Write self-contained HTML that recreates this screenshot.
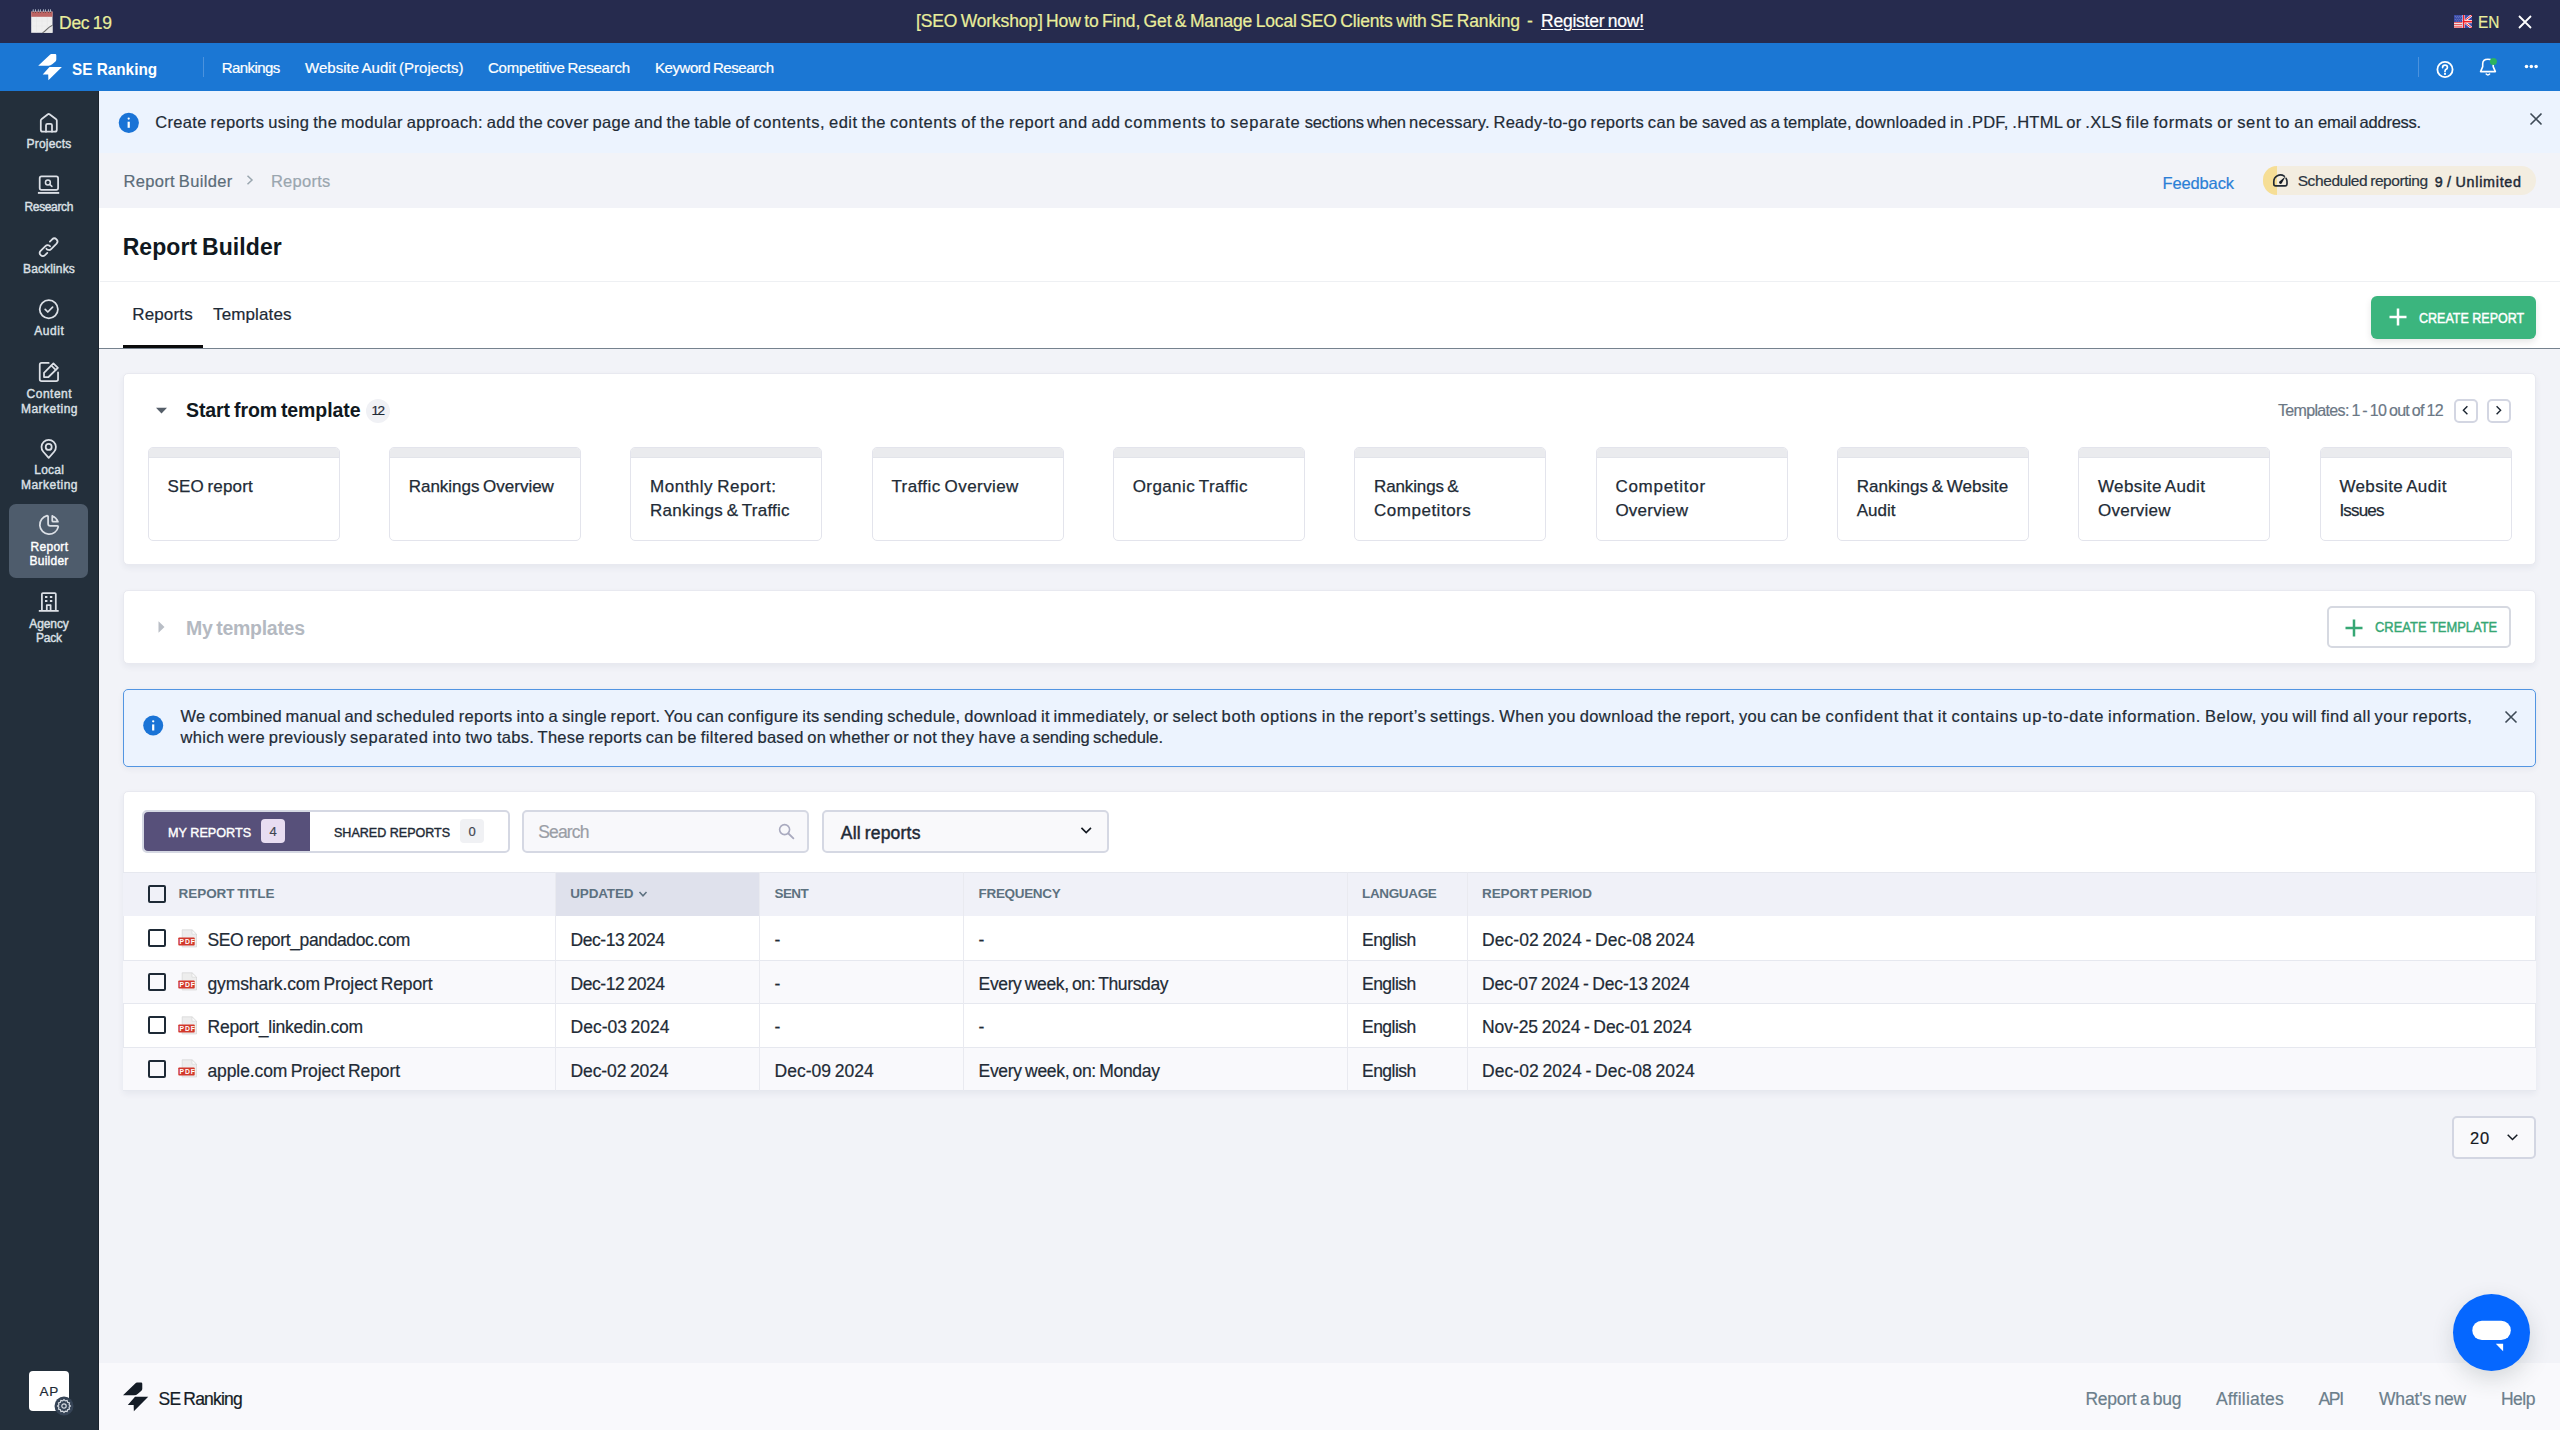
<!DOCTYPE html>
<html><head><meta charset="utf-8"><title>SE Ranking - Report Builder</title>
<style>
html,body{margin:0;padding:0;}
body{width:2560px;height:1430px;position:relative;overflow:hidden;background:#F2F3F8;font-family:"Liberation Sans",sans-serif;}
.b{position:absolute;box-sizing:content-box;}
.t{position:absolute;white-space:nowrap;line-height:1;}
.tc{background:#fff;border:1px solid #E3E4EC;border-radius:5px;overflow:hidden;box-sizing:border-box;}
.tch{height:9px;background:#EAEBEE;border-bottom:1px solid #E2E4EA;}
</style></head><body>
<div class="b" style="left:0px;top:0px;width:2560px;height:43px;background:#262B4E;"></div>
<div class="b" style="left:0px;top:43px;width:2560px;height:48px;background:#1B77D4;"></div>
<div class="b" style="left:0px;top:91px;width:98px;height:1339px;background:#232F3B;"></div>
<div class="b" style="left:98px;top:91px;width:1px;height:1339px;background:#1B242E;"></div>
<div class="b" style="left:99px;top:91px;width:2461px;height:62px;background:#ECF3FE;"></div>
<div class="b" style="left:99px;top:153px;width:2461px;height:55px;background:#F2F3F8;"></div>
<div class="b" style="left:99px;top:208px;width:2461px;height:140px;background:#FFFFFF;"></div>
<div class="b" style="left:100px;top:281px;width:2460px;height:1px;background:#EEF0F3;"></div>
<div class="b" style="left:99px;top:348px;width:2461px;height:1px;background:#76828E;"></div>
<div class="b" style="left:123px;top:345px;width:80px;height:3px;background:#0B0B0B;"></div>
<div class="b" style="left:99px;top:1363px;width:2461px;height:67px;background:#F9F9FC;"></div>
<svg class="b" style="left:26px;top:4px" width="34" height="34" viewBox="26 4 34 34">
<rect x="31.2" y="11.6" width="21.3" height="21.2" fill="#EFEFEF"/>
<rect x="31.2" y="11.6" width="21.3" height="5.2" fill="#BD6463"/>
<g stroke="#E2E2E2" stroke-width="0.3"><line x1="31.2" y1="21" x2="52.5" y2="21"/><line x1="31.2" y1="26" x2="52.5" y2="26"/><line x1="36.5" y1="16.8" x2="36.5" y2="32.8"/><line x1="42" y1="16.8" x2="42" y2="32.8"/><line x1="47.3" y1="16.8" x2="47.3" y2="32.8"/></g>
<g fill="#AEB6C6"><ellipse cx="33.2" cy="10.6" rx="0.55" ry="1.6"/><ellipse cx="35.5" cy="10.6" rx="0.55" ry="1.6"/><ellipse cx="38.3" cy="10.6" rx="0.55" ry="1.6"/><ellipse cx="40.4" cy="10.6" rx="0.55" ry="1.6"/><ellipse cx="43.4" cy="10.6" rx="0.55" ry="1.6"/><ellipse cx="45.4" cy="10.6" rx="0.55" ry="1.6"/><ellipse cx="48.4" cy="10.6" rx="0.55" ry="1.6"/><ellipse cx="50.5" cy="10.6" rx="0.55" ry="1.6"/></g>
<g fill="#5A3A3A"><circle cx="33.2" cy="12.6" r="0.5"/><circle cx="35.5" cy="12.6" r="0.5"/><circle cx="38.3" cy="12.6" r="0.5"/><circle cx="40.4" cy="12.6" r="0.5"/><circle cx="43.4" cy="12.6" r="0.5"/><circle cx="45.4" cy="12.6" r="0.5"/><circle cx="48.4" cy="12.6" r="0.5"/><circle cx="50.5" cy="12.6" r="0.5"/></g>
<path d="M42.5 32.8 C46 31.8 46.5 27.5 52.5 25.2 L52.5 32.8 Z" fill="#E6E6E6"/>
<path d="M42.5 32.8 C46 31.8 46.5 27.5 52.5 25.2" fill="none" stroke="#6A6A6A" stroke-width="1.1"/>
</svg>
<div class="t" style="left:59.0px;top:14.7px;font-size:17.5px;color:#E9EE9C;-webkit-text-stroke:0.2px currentColor;letter-spacing:-0.255px;word-spacing:-1.173px;">Dec 19</div>
<div class="t" style="left:916.0px;top:13.0px;font-size:17.5px;color:#E9EE9C;-webkit-text-stroke:0.2px currentColor;letter-spacing:-0.160px;word-spacing:-1.173px;">[SEO Workshop] How to Find, Get &amp; Manage Local SEO Clients with SE Ranking</div>
<div class="t" style="left:1527.0px;top:13.0px;font-size:17.5px;color:#E9EE9C;-webkit-text-stroke:0.2px currentColor;">-</div>
<div class="t" style="left:1541.0px;top:13.0px;font-size:17.5px;color:#FFFFFF;-webkit-text-stroke:0.2px currentColor;letter-spacing:-0.235px;text-decoration:underline;text-underline-offset:2px;word-spacing:-1.173px;">Register now!</div>
<svg class="b" style="left:2454px;top:14.8px" width="18" height="13.2" viewBox="0 0 18 13.2">
<rect width="18" height="13.2" fill="#3A4BA8"/>
<rect x="0" y="7.2" width="8.5" height="6" fill="#F2F2F2"/>
<g fill="#E8474A"><rect y="7.2" width="8.5" height="0.9"/><rect y="9" width="8.5" height="0.9"/><rect y="10.8" width="8.5" height="0.9"/><rect y="12.4" width="8.5" height="0.8"/></g>
<g fill="#C9D0EE" opacity="0.8"><circle cx="1.2" cy="1.2" r="0.45"/><circle cx="3.2" cy="1.2" r="0.45"/><circle cx="5.2" cy="1.2" r="0.45"/><circle cx="7.2" cy="1.2" r="0.45"/><circle cx="2.2" cy="2.8" r="0.45"/><circle cx="4.2" cy="2.8" r="0.45"/><circle cx="6.2" cy="2.8" r="0.45"/><circle cx="1.2" cy="4.4" r="0.45"/><circle cx="3.2" cy="4.4" r="0.45"/><circle cx="5.2" cy="4.4" r="0.45"/><circle cx="7.2" cy="4.4" r="0.45"/><circle cx="2.2" cy="6" r="0.45"/><circle cx="4.2" cy="6" r="0.45"/><circle cx="6.2" cy="6" r="0.45"/></g>
<path d="M10 6.6 L18 0 M10 6.6 L18 13.2" stroke="#fff" stroke-width="2.4"/>
<path d="M10.5 5.6 L18 0.2 M10.5 7.6 L18 13" stroke="#F01C24" stroke-width="1"/>
<rect x="8.5" y="0" width="2.2" height="13.2" fill="#fff"/>
<rect x="8.5" y="5" width="9.5" height="3.2" fill="#fff"/>
<rect x="9" y="0" width="1.3" height="13.2" fill="#F01C24"/>
<rect x="8.5" y="5.8" width="9.5" height="1.7" fill="#F01C24"/>
</svg>
<div class="t" style="left:2478.4px;top:13.6px;font-size:17px;color:#E9EE9C;-webkit-text-stroke:0.2px currentColor;transform:scaleX(0.9065);transform-origin:0 0;">EN</div>
<svg class="b" style="left:2518px;top:14.5px" width="14" height="14" viewBox="0 0 14 14"><path d="M1 1 L13 13 M13 1 L1 13" stroke="#fff" stroke-width="1.8"/></svg>
<svg class="b" style="left:34px;top:50px" width="32" height="34" viewBox="34 50 32 34"><path d="M38.2 65.7 L50.2 54.5 Q50.6 54.1 51.2 54.1 L55.2 54.1 Q56.3 54.1 56.3 55.2 L56.3 59.6 Q56.3 60.6 55.5 61.4 L52.2 64.3 Q50.6 65.7 48.6 65.7 Z" fill="#fff"/><path d="M42.7 74.5 L49.5 66.9 L61.9 66.9 L48.4 80.2 L48.2 74.5 Z" fill="#fff"/></svg>
<div class="t" style="left:72.4px;top:60.9px;font-size:16.5px;color:#FFFFFF;font-weight:700;transform:scaleX(0.9282);transform-origin:0 0;">SE Ranking</div>
<div class="b" style="left:203px;top:57px;width:1px;height:20px;background:#4B92DD;"></div>
<div class="t" style="left:221.8px;top:60.2px;font-size:15px;color:#FFFFFF;-webkit-text-stroke:0.2px currentColor;letter-spacing:-0.591px;">Rankings</div>
<div class="t" style="left:305.0px;top:60.2px;font-size:15px;color:#FFFFFF;-webkit-text-stroke:0.2px currentColor;letter-spacing:0.031px;word-spacing:-1.005px;">Website Audit (Projects)</div>
<div class="t" style="left:488.0px;top:60.2px;font-size:15px;color:#FFFFFF;-webkit-text-stroke:0.2px currentColor;letter-spacing:-0.240px;word-spacing:-1.005px;">Competitive Research</div>
<div class="t" style="left:655.0px;top:60.2px;font-size:15px;color:#FFFFFF;-webkit-text-stroke:0.2px currentColor;letter-spacing:-0.448px;word-spacing:-1.005px;">Keyword Research</div>
<div class="b" style="left:2418px;top:57px;width:1px;height:20px;background:#4B92DD;"></div>
<svg class="b" style="left:2435px;top:60px" width="20" height="20" viewBox="0 0 20 20"><circle cx="10" cy="9.5" r="7.6" fill="none" stroke="#fff" stroke-width="1.8"/><path d="M7.6 7.6 Q7.6 5.2 10 5.2 Q12.4 5.2 12.4 7.4 Q12.4 8.8 10.8 9.6 Q10 10 10 11.4" fill="none" stroke="#fff" stroke-width="1.7" stroke-linecap="round"/><circle cx="10" cy="13.9" r="1.1" fill="#fff"/></svg>
<svg class="b" style="left:2475px;top:54px" width="26" height="26" viewBox="2475 54 26 26"><path d="M2480.6 71.6 L2495.4 71.6 L2493.2 66.6 L2493.2 63.8 Q2493.2 59.3 2487.9 59.3 Q2482.7 59.3 2482.7 63.8 L2482.7 66.6 Z" fill="none" stroke="#fff" stroke-width="1.6" stroke-linejoin="round"/><path d="M2486.2 74.1 Q2487.9 75.9 2489.6 74.1" fill="none" stroke="#fff" stroke-width="1.5" stroke-linecap="round"/><circle cx="2493.4" cy="61.5" r="3.5" fill="#2DB360"/></svg>
<svg class="b" style="left:2520px;top:60px" width="22" height="12" viewBox="2520 60 22 12"><circle cx="2526.5" cy="66.4" r="1.75" fill="#fff"/><circle cx="2531.3" cy="66.4" r="1.75" fill="#fff"/><circle cx="2536.1" cy="66.4" r="1.75" fill="#fff"/></svg>
<div class="b" style="left:9px;top:504px;width:79px;height:74px;background:#4E5C6C;border-radius:7px;"></div>
<svg class="b" style="left:0px;top:91px" width="98" height="570" viewBox="0 91 98 570"><g fill="none" stroke="#DCE0E6" stroke-width="1.75" stroke-linecap="round" stroke-linejoin="round">
<path d="M40.8 129.7 L40.8 120.6 Q40.8 119.8 41.4 119.3 L47.9 114.3 Q48.7 113.7 49.5 114.3 L56.2 119.3 Q56.8 119.8 56.8 120.6 L56.8 129.7 Q56.8 131.7 54.8 131.7 L42.8 131.7 Q40.8 131.7 40.8 129.7 Z"/>
<path d="M46 131.7 L46 125.3 Q46 123.8 47.5 123.8 L50.5 123.8 Q52 123.8 52 125.3 L52 131.7"/>
<rect x="39.7" y="176.4" width="18.4" height="13.4" rx="1.8"/>
<path d="M37.9 192.9 L59.2 192.9" stroke-linecap="butt" stroke-width="1.9"/>
<circle cx="47.9" cy="182.5" r="2.45" stroke-width="1.5"/>
<path d="M49.7 184.4 L51.9 186.4" stroke-width="1.5"/>
<path d="M49.87 241.59 L52.21 239.26 A3.1 3.1 0 0 1 56.59 243.64 L51.14 249.09 A3.1 3.1 0 0 1 46.41 248.68"/>
<path d="M50.08 246.33 A3.1 3.1 0 0 0 45.41 246.01 L40.61 250.81 A3.1 3.1 0 0 0 44.99 255.19 L47.33 252.86"/>
<circle cx="48.8" cy="309.2" r="9.1"/>
<path d="M45.2 309.4 L47.8 312 L52.6 307.2"/>
<path d="M48.7 362.95 L41.6 362.95 Q39.75 362.95 39.75 364.8 L39.75 379.3 Q39.75 381.15 41.6 381.15 L56.2 381.15 Q58.05 381.15 58.05 379.3 L58.05 372.4"/>
<path d="M44 377 L44 372.8 L53.4 363.4 L57.9 367.8 L48.5 377 Z"/>
<path d="M51.3 365.5 L55.7 369.9"/>
<path d="M48.7 457.9 L43.29 451.75 A7.2 7.2 0 1 1 54.11 451.75 Z"/>
<circle cx="48.7" cy="446.9" r="3"/>
<g transform="translate(36.66 512.34) scale(1.04)" stroke-width="1.68"><path d="M10 3.2a9 9 0 1 0 10.8 10.8a1 1 0 0 0 -1 -1h-6.8a2 2 0 0 1 -2 -2v-7a.9 .9 0 0 0 -1 -.8"/><path d="M15 3.5a9 9 0 0 1 5.5 5.5h-4.5a1 1 0 0 1 -1 -1v-4.5"/></g>
<path d="M41.9 610.9 L41.9 594.1 Q41.9 593.1 42.9 593.1 L54.8 593.1 Q55.8 593.1 55.8 594.1 L55.8 610.9" stroke-linecap="butt"/>
<path d="M38.8 610.9 L58.7 610.9" stroke-linecap="butt"/>
<path d="M46.8 610.9 L46.8 605 L50.6 605 L50.6 610.9" stroke-linecap="butt"/>
</g>
<g fill="#DCE0E6"><rect x="45" y="596" width="2.4" height="2"/><rect x="49.9" y="596" width="2.4" height="2"/><rect x="45" y="600" width="2.4" height="2"/><rect x="49.9" y="600" width="2.4" height="2"/></g>
</svg>
<div class="t" style="left:26.6px;top:137.8px;font-size:12px;color:#DCE0E6;letter-spacing:0.193px;-webkit-text-stroke:0.4px currentColor;">Projects</div>
<div class="t" style="left:24.5px;top:200.8px;font-size:12px;color:#DCE0E6;letter-spacing:-0.351px;-webkit-text-stroke:0.4px currentColor;">Research</div>
<div class="t" style="left:23.0px;top:263.3px;font-size:12px;color:#DCE0E6;letter-spacing:0.139px;-webkit-text-stroke:0.4px currentColor;">Backlinks</div>
<div class="t" style="left:34.3px;top:325.3px;font-size:12px;color:#DCE0E6;letter-spacing:0.562px;-webkit-text-stroke:0.4px currentColor;">Audit</div>
<div class="t" style="left:26.6px;top:387.5px;font-size:12px;color:#DCE0E6;letter-spacing:0.495px;-webkit-text-stroke:0.4px currentColor;">Content</div>
<div class="t" style="left:21.0px;top:402.8px;font-size:12px;color:#DCE0E6;letter-spacing:0.476px;-webkit-text-stroke:0.4px currentColor;">Marketing</div>
<div class="t" style="left:34.3px;top:464.4px;font-size:12px;color:#DCE0E6;letter-spacing:0.203px;-webkit-text-stroke:0.4px currentColor;">Local</div>
<div class="t" style="left:21.0px;top:478.8px;font-size:12px;color:#DCE0E6;letter-spacing:0.476px;-webkit-text-stroke:0.4px currentColor;">Marketing</div>
<div class="t" style="left:30.5px;top:541.3px;font-size:12px;color:#FFFFFF;letter-spacing:0.296px;-webkit-text-stroke:0.4px currentColor;">Report</div>
<div class="t" style="left:29.6px;top:555.3px;font-size:12px;color:#FFFFFF;letter-spacing:0.224px;-webkit-text-stroke:0.4px currentColor;">Builder</div>
<div class="t" style="left:29.3px;top:618.3px;font-size:12px;color:#DCE0E6;letter-spacing:-0.105px;-webkit-text-stroke:0.4px currentColor;">Agency</div>
<div class="t" style="left:36.0px;top:632.3px;font-size:12px;color:#DCE0E6;letter-spacing:-0.226px;-webkit-text-stroke:0.4px currentColor;">Pack</div>
<div class="b" style="left:29px;top:1371px;width:40px;height:40px;background:#fff;border-radius:4px;"></div>
<div class="t" style="left:39.6px;top:1385.4px;font-size:13.5px;color:#1E2A36;-webkit-text-stroke:0.2px currentColor;letter-spacing:0.590px;">AP</div>
<svg class="b" style="left:54px;top:1396px" width="20" height="20" viewBox="0 0 20 20"><circle cx="10" cy="10" r="9.5" fill="#364456"/><g fill="none" stroke="#D5DAE0" stroke-width="1.2"><circle cx="10" cy="10" r="2.2"/><path d="M10 3.6 L11.3 4.9 L13.1 4.4 L13.6 6.2 L15.5 6.9 L15.1 8.7 L16.4 10 L15.1 11.3 L15.5 13.1 L13.6 13.8 L13.1 15.6 L11.3 15.1 L10 16.4 L8.7 15.1 L6.9 15.6 L6.4 13.8 L4.5 13.1 L4.9 11.3 L3.6 10 L4.9 8.7 L4.5 6.9 L6.4 6.2 L6.9 4.4 L8.7 4.9 Z"/></g></svg>
<svg class="b" style="left:118px;top:112px" width="22" height="22" viewBox="0 0 22 22"><circle cx="10.8" cy="10.8" r="10.1" fill="#1A73D6"/><circle cx="10.7" cy="6.6" r="1.15" fill="#fff"/><rect x="9.6" y="9.7" width="2.2" height="6.1" fill="#fff"/></svg>
<div class="t" style="left:155.2px;top:113.8px;font-size:16.5px;color:#222B36;letter-spacing:0.345px;word-spacing:-1.106px;-webkit-text-stroke:0.2px currentColor;">Create reports using the </div>
<div class="t" style="left:341.0px;top:113.8px;font-size:16.5px;color:#222B36;letter-spacing:0.324px;word-spacing:-1.106px;-webkit-text-stroke:0.2px currentColor;">modular approach: add the </div>
<div class="t" style="left:546.8px;top:113.8px;font-size:16.5px;color:#222B36;letter-spacing:0.317px;word-spacing:-1.106px;-webkit-text-stroke:0.2px currentColor;">cover page and the table of </div>
<div class="t" style="left:753.6px;top:113.8px;font-size:16.5px;color:#222B36;letter-spacing:0.498px;word-spacing:-1.106px;-webkit-text-stroke:0.2px currentColor;">contents, edit the </div>
<div class="t" style="left:890.0px;top:113.8px;font-size:16.5px;color:#222B36;letter-spacing:0.593px;word-spacing:-1.106px;-webkit-text-stroke:0.2px currentColor;">contents of the </div>
<div class="t" style="left:1009.0px;top:113.8px;font-size:16.5px;color:#222B36;letter-spacing:0.447px;word-spacing:-1.106px;-webkit-text-stroke:0.2px currentColor;">report and add </div>
<div class="t" style="left:1124.3px;top:113.8px;font-size:16.5px;color:#222B36;letter-spacing:0.761px;word-spacing:-1.106px;-webkit-text-stroke:0.2px currentColor;">comments to separate </div>
<div class="t" style="left:1304.8px;top:113.8px;font-size:16.5px;color:#222B36;letter-spacing:-0.195px;word-spacing:-1.106px;-webkit-text-stroke:0.2px currentColor;">sections when </div>
<div class="t" style="left:1409.0px;top:113.8px;font-size:16.5px;color:#222B36;letter-spacing:0.230px;word-spacing:-1.106px;-webkit-text-stroke:0.2px currentColor;">necessary. Ready-to-go </div>
<div class="t" style="left:1590.6px;top:113.8px;font-size:16.5px;color:#222B36;letter-spacing:0.303px;word-spacing:-1.106px;-webkit-text-stroke:0.2px currentColor;">reports can be </div>
<div class="t" style="left:1701.9px;top:113.8px;font-size:16.5px;color:#222B36;letter-spacing:0.042px;word-spacing:-1.106px;-webkit-text-stroke:0.2px currentColor;">saved as a template, </div>
<div class="t" style="left:1855.2px;top:113.8px;font-size:16.5px;color:#222B36;letter-spacing:0.224px;word-spacing:-1.106px;-webkit-text-stroke:0.2px currentColor;">downloaded in .PDF, </div>
<div class="t" style="left:2012.3px;top:113.8px;font-size:16.5px;color:#222B36;letter-spacing:0.274px;word-spacing:-1.106px;-webkit-text-stroke:0.2px currentColor;">.HTML or .XLS </div>
<div class="t" style="left:2125.9px;top:113.8px;font-size:16.5px;color:#222B36;letter-spacing:0.630px;word-spacing:-1.106px;-webkit-text-stroke:0.2px currentColor;">file formats or </div>
<div class="t" style="left:2237.2px;top:113.8px;font-size:16.5px;color:#222B36;letter-spacing:0.651px;word-spacing:-1.106px;-webkit-text-stroke:0.2px currentColor;">sent to an </div>
<div class="t" style="left:2318.1px;top:113.8px;font-size:16.5px;color:#222B36;letter-spacing:-0.238px;word-spacing:-1.106px;-webkit-text-stroke:0.2px currentColor;">email address.</div>
<svg class="b" style="left:2529px;top:112px" width="14" height="14" viewBox="0 0 14 14"><path d="M1.5 1.5 L12.5 12.5 M12.5 1.5 L1.5 12.5" stroke="#3E4A56" stroke-width="1.6"/></svg>
<div class="t" style="left:123.4px;top:173.2px;font-size:16.5px;color:#5B6C79;-webkit-text-stroke:0.2px currentColor;letter-spacing:0.349px;word-spacing:-1.106px;">Report Builder</div>
<svg class="b" style="left:245px;top:174px" width="10" height="12" viewBox="0 0 10 12"><path d="M2.5 1.8 L7 6 L2.5 10.2" fill="none" stroke="#9AA6AF" stroke-width="1.5"/></svg>
<div class="t" style="left:270.9px;top:173.2px;font-size:16.5px;color:#9AA6AF;-webkit-text-stroke:0.2px currentColor;letter-spacing:0.271px;">Reports</div>
<div class="t" style="left:2162.5px;top:174.6px;font-size:16.5px;color:#2B7FD6;-webkit-text-stroke:0.2px currentColor;letter-spacing:-0.138px;">Feedback</div>
<div class="b" style="left:2263px;top:166px;width:273px;height:29px;background:#F3EDE0;border-radius:15px;overflow:hidden;"></div>
<div class="b" style="left:2263px;top:166px;width:14px;height:29px;background:#F6DE96;border-radius:15px 0 0 15px;"></div>
<svg class="b" style="left:2268px;top:170px" width="24" height="20" viewBox="2268 170 24 20"><path d="M2284.2 176.2 A6.6 6.6 0 0 0 2273.8 181.6 L2273.8 184.1 Q2273.8 185.9 2275.6 185.9 L2285.2 185.9 Q2287 185.9 2287 184.1 L2287 181.6 A6.6 6.6 0 0 0 2286.1 178.3" fill="none" stroke="#222A33" stroke-width="1.65" stroke-linecap="round" stroke-linejoin="round"/><path d="M2285.6 176.3 L2281.8 183.2 Q2280.8 184.4 2279.5 183.5 Q2278.5 182.4 2279.5 181.5 Z" fill="#141A22"/></svg>
<div class="t" style="left:2297.7px;top:173.2px;font-size:15.5px;color:#2B3540;-webkit-text-stroke:0.2px currentColor;letter-spacing:-0.406px;word-spacing:-1.038px;">Scheduled reporting</div>
<div class="t" style="left:2434.7px;top:175.1px;font-size:14.3px;color:#1E2A36;letter-spacing:0.728px;-webkit-text-stroke:0.45px #1E2A36;word-spacing:-0.958px;">9 / Unlimited</div>
<div class="t" style="left:122.7px;top:235.5px;font-size:23px;color:#101820;font-weight:700;letter-spacing:0.062px;word-spacing:-1.541px;">Report Builder</div>
<div class="t" style="left:132.2px;top:305.8px;font-size:17px;color:#1E2A36;-webkit-text-stroke:0.2px currentColor;letter-spacing:0.162px;">Reports</div>
<div class="t" style="left:213.0px;top:305.8px;font-size:17px;color:#1E2A36;-webkit-text-stroke:0.2px currentColor;letter-spacing:0.127px;">Templates</div>
<div class="b" style="left:2371px;top:296px;width:165px;height:43px;background:#3BB57E;border-radius:6px;box-shadow:0 3px 7px rgba(0,0,0,0.10);"></div>
<svg class="b" style="left:2389px;top:308px" width="18" height="18" viewBox="0 0 18 18"><path d="M9 0.5 V17.5 M0.5 9 H17.5" stroke="#fff" stroke-width="2.5"/></svg>
<div class="t" style="left:2418.5px;top:309.6px;font-size:15.3px;color:#FFFFFF;-webkit-text-stroke:0.45px #FFFFFF;transform:scaleX(0.8181);transform-origin:0 0;">CREATE REPORT</div>
<div class="b" style="left:123px;top:373px;width:2413px;height:192px;background:#fff;border:1px solid #E8E9F0;box-sizing:border-box;border-radius:5px;box-shadow:0 3px 6px rgba(40,45,80,0.06);"></div>
<svg class="b" style="left:155px;top:406px" width="13" height="9" viewBox="0 0 13 9"><path d="M1 1.8 L12 1.8 L6.5 7.4 Z" fill="#555E69"/></svg>
<div class="t" style="left:186.0px;top:401.1px;font-size:19.5px;color:#101820;font-weight:700;letter-spacing:-0.093px;word-spacing:-1.306px;">Start from template</div>
<div class="b" style="left:366px;top:399px;width:24px;height:24px;background:#F0F1F5;border-radius:12px;"></div>
<div class="t" style="left:371.5px;top:404.2px;font-size:13.5px;color:#1E2A36;-webkit-text-stroke:0.2px currentColor;letter-spacing:-1.517px;">12</div>
<div class="t" style="left:2278.0px;top:403.1px;font-size:16px;color:#6B7785;-webkit-text-stroke:0.2px currentColor;letter-spacing:-0.666px;word-spacing:-1.072px;">Templates: 1 - 10 out of 12</div>
<div class="b" style="left:2454px;top:399px;width:20px;height:20px;border:2px solid #D3D6E2;border-radius:5px;"></div>
<svg class="b" style="left:2461px;top:405px" width="9" height="11" viewBox="0 0 9 11"><path d="M6.4 1.3 L2.4 5.3 L6.4 9.3" fill="none" stroke="#1A2430" stroke-width="1.4"/></svg>
<div class="b" style="left:2487.3px;top:399px;width:20px;height:20px;border:2px solid #D3D6E2;border-radius:5px;"></div>
<svg class="b" style="left:2494px;top:405px" width="9" height="11" viewBox="0 0 9 11"><path d="M2.6 1.3 L6.6 5.3 L2.6 9.3" fill="none" stroke="#1A2430" stroke-width="1.4"/></svg>
<div class="b tc" style="left:147.6px;top:447px;width:192px;height:94px;"><div class="tch"></div></div>
<div class="t" style="left:167.4px;top:477.7px;font-size:17px;color:#222B36;letter-spacing:0.167px;-webkit-text-stroke:0.25px #222B36;word-spacing:-1.139px;">SEO report</div>
<div class="b tc" style="left:388.9px;top:447px;width:192px;height:94px;"><div class="tch"></div></div>
<div class="t" style="left:408.7px;top:477.7px;font-size:17px;color:#222B36;letter-spacing:-0.007px;-webkit-text-stroke:0.25px #222B36;word-spacing:-1.139px;">Rankings Overview</div>
<div class="b tc" style="left:630.3px;top:447px;width:192px;height:94px;"><div class="tch"></div></div>
<div class="t" style="left:650.1px;top:477.7px;font-size:17px;color:#222B36;letter-spacing:0.496px;-webkit-text-stroke:0.25px #222B36;word-spacing:-1.139px;">Monthly Report:</div>
<div class="t" style="left:650.1px;top:501.7px;font-size:17px;color:#222B36;letter-spacing:0.243px;-webkit-text-stroke:0.25px #222B36;word-spacing:-1.139px;">Rankings &amp; Traffic</div>
<div class="b tc" style="left:871.6px;top:447px;width:192px;height:94px;"><div class="tch"></div></div>
<div class="t" style="left:891.4px;top:477.7px;font-size:17px;color:#222B36;letter-spacing:0.419px;-webkit-text-stroke:0.25px #222B36;word-spacing:-1.139px;">Traffic Overview</div>
<div class="b tc" style="left:1112.9px;top:447px;width:192px;height:94px;"><div class="tch"></div></div>
<div class="t" style="left:1132.7px;top:477.7px;font-size:17px;color:#222B36;letter-spacing:0.408px;-webkit-text-stroke:0.25px #222B36;word-spacing:-1.139px;">Organic Traffic</div>
<div class="b tc" style="left:1354.2px;top:447px;width:192px;height:94px;"><div class="tch"></div></div>
<div class="t" style="left:1374.0px;top:477.7px;font-size:17px;color:#222B36;letter-spacing:-0.122px;-webkit-text-stroke:0.25px #222B36;word-spacing:-1.139px;">Rankings &amp;</div>
<div class="t" style="left:1374.0px;top:501.7px;font-size:17px;color:#222B36;letter-spacing:0.516px;-webkit-text-stroke:0.25px #222B36;">Competitors</div>
<div class="b tc" style="left:1595.6px;top:447px;width:192px;height:94px;"><div class="tch"></div></div>
<div class="t" style="left:1615.4px;top:477.7px;font-size:17px;color:#222B36;letter-spacing:0.729px;-webkit-text-stroke:0.25px #222B36;">Competitor</div>
<div class="t" style="left:1615.4px;top:501.7px;font-size:17px;color:#222B36;letter-spacing:0.250px;-webkit-text-stroke:0.25px #222B36;">Overview</div>
<div class="b tc" style="left:1836.9px;top:447px;width:192px;height:94px;"><div class="tch"></div></div>
<div class="t" style="left:1856.7px;top:477.7px;font-size:17px;color:#222B36;letter-spacing:0.054px;-webkit-text-stroke:0.25px #222B36;word-spacing:-1.139px;">Rankings &amp; Website</div>
<div class="t" style="left:1856.7px;top:501.7px;font-size:17px;color:#222B36;-webkit-text-stroke:0.25px #222B36;">Audit</div>
<div class="b tc" style="left:2078.2px;top:447px;width:192px;height:94px;"><div class="tch"></div></div>
<div class="t" style="left:2098.0px;top:477.7px;font-size:17px;color:#222B36;letter-spacing:0.375px;-webkit-text-stroke:0.25px #222B36;word-spacing:-1.139px;">Website Audit</div>
<div class="t" style="left:2098.0px;top:501.7px;font-size:17px;color:#222B36;letter-spacing:0.250px;-webkit-text-stroke:0.25px #222B36;">Overview</div>
<div class="b tc" style="left:2319.6px;top:447px;width:192px;height:94px;"><div class="tch"></div></div>
<div class="t" style="left:2339.4px;top:477.7px;font-size:17px;color:#222B36;letter-spacing:0.375px;-webkit-text-stroke:0.25px #222B36;word-spacing:-1.139px;">Website Audit</div>
<div class="t" style="left:2339.4px;top:501.7px;font-size:17px;color:#222B36;letter-spacing:-0.807px;-webkit-text-stroke:0.25px #222B36;">Issues</div>
<div class="b" style="left:123px;top:590px;width:2413px;height:74px;background:#fff;border:1px solid #E8E9F0;box-sizing:border-box;border-radius:5px;box-shadow:0 3px 6px rgba(40,45,80,0.06);"></div>
<svg class="b" style="left:157px;top:620px" width="9" height="14" viewBox="0 0 9 14"><path d="M1.5 1.2 L7.5 7 L1.5 12.8 Z" fill="#B9BEC6"/></svg>
<div class="t" style="left:186.0px;top:618.9px;font-size:19.5px;color:#B4B9C1;font-weight:700;letter-spacing:-0.294px;word-spacing:-1.306px;">My templates</div>
<div class="b" style="left:2327px;top:606px;width:180px;height:38px;border:2px solid #D6D9E1;border-radius:5px;background:#fff;"></div>
<svg class="b" style="left:2345px;top:619px" width="18" height="18" viewBox="0 0 18 18"><path d="M9 0.5 V17.5 M0.5 9 H17.5" stroke="#36A774" stroke-width="2.5"/></svg>
<div class="t" style="left:2375.0px;top:618.8px;font-size:15.3px;color:#36A774;-webkit-text-stroke:0.45px #36A774;transform:scaleX(0.8459);transform-origin:0 0;">CREATE TEMPLATE</div>
<div class="b" style="left:123px;top:689px;width:2411px;height:76px;background:#ECF3FE;border:1px solid #5295E2;border-radius:5px;box-shadow:0 2px 6px rgba(30,40,60,0.06);"></div>
<svg class="b" style="left:143px;top:715px" width="21" height="21" viewBox="0 0 21 21"><circle cx="10.2" cy="10.5" r="10" fill="#1A73D6"/><circle cx="10.2" cy="6.3" r="1.15" fill="#fff"/><rect x="9.1" y="9.4" width="2.2" height="6.1" fill="#fff"/></svg>
<div class="t" style="left:180.5px;top:707.8px;font-size:16.5px;color:#222B36;letter-spacing:0.180px;word-spacing:-1.106px;-webkit-text-stroke:0.2px currentColor;">We combined manual and </div>
<div class="t" style="left:376.2px;top:707.8px;font-size:16.5px;color:#222B36;letter-spacing:0.377px;word-spacing:-1.106px;-webkit-text-stroke:0.2px currentColor;">scheduled reports into a </div>
<div class="t" style="left:561.9px;top:707.8px;font-size:16.5px;color:#222B36;letter-spacing:0.306px;word-spacing:-1.106px;-webkit-text-stroke:0.2px currentColor;">single report. You can </div>
<div class="t" style="left:727.8px;top:707.8px;font-size:16.5px;color:#222B36;letter-spacing:0.308px;word-spacing:-1.106px;-webkit-text-stroke:0.2px currentColor;">configure its sending </div>
<div class="t" style="left:887.2px;top:707.8px;font-size:16.5px;color:#222B36;letter-spacing:0.293px;word-spacing:-1.106px;-webkit-text-stroke:0.2px currentColor;">schedule, download it </div>
<div class="t" style="left:1053.6px;top:707.8px;font-size:16.5px;color:#222B36;letter-spacing:0.365px;word-spacing:-1.106px;-webkit-text-stroke:0.2px currentColor;">immediately, or select </div>
<div class="t" style="left:1221.6px;top:707.8px;font-size:16.5px;color:#222B36;letter-spacing:0.606px;word-spacing:-1.106px;-webkit-text-stroke:0.2px currentColor;">both options in </div>
<div class="t" style="left:1339.9px;top:707.8px;font-size:16.5px;color:#222B36;letter-spacing:0.429px;word-spacing:-1.106px;-webkit-text-stroke:0.2px currentColor;">the report’s settings. </div>
<div class="t" style="left:1499.3px;top:707.8px;font-size:16.5px;color:#222B36;letter-spacing:0.412px;word-spacing:-1.106px;-webkit-text-stroke:0.2px currentColor;">When you download </div>
<div class="t" style="left:1657.5px;top:707.8px;font-size:16.5px;color:#222B36;letter-spacing:0.318px;word-spacing:-1.106px;-webkit-text-stroke:0.2px currentColor;">the report, you can </div>
<div class="t" style="left:1801.6px;top:707.8px;font-size:16.5px;color:#222B36;letter-spacing:0.714px;word-spacing:-1.106px;-webkit-text-stroke:0.2px currentColor;">be confident that it </div>
<div class="t" style="left:1951.6px;top:707.8px;font-size:16.5px;color:#222B36;letter-spacing:0.643px;word-spacing:-1.106px;-webkit-text-stroke:0.2px currentColor;">contains up-to-date </div>
<div class="t" style="left:2108.1px;top:707.8px;font-size:16.5px;color:#222B36;letter-spacing:0.551px;word-spacing:-1.106px;-webkit-text-stroke:0.2px currentColor;">information. Below, </div>
<div class="t" style="left:2260.9px;top:707.8px;font-size:16.5px;color:#222B36;letter-spacing:0.398px;word-spacing:-1.106px;-webkit-text-stroke:0.2px currentColor;">you will find all </div>
<div class="t" style="left:2374.6px;top:707.8px;font-size:16.5px;color:#222B36;letter-spacing:0.474px;word-spacing:-1.106px;-webkit-text-stroke:0.2px currentColor;">your reports,</div>
<div class="t" style="left:180.5px;top:728.9px;font-size:16.5px;color:#222B36;letter-spacing:0.310px;word-spacing:-1.106px;-webkit-text-stroke:0.2px currentColor;">which were previously </div>
<div class="t" style="left:350.0px;top:728.9px;font-size:16.5px;color:#222B36;letter-spacing:0.568px;word-spacing:-1.106px;-webkit-text-stroke:0.2px currentColor;">separated into two </div>
<div class="t" style="left:496.9px;top:728.9px;font-size:16.5px;color:#222B36;letter-spacing:0.284px;word-spacing:-1.106px;-webkit-text-stroke:0.2px currentColor;">tabs. These reports </div>
<div class="t" style="left:645.7px;top:728.9px;font-size:16.5px;color:#222B36;letter-spacing:0.436px;word-spacing:-1.106px;-webkit-text-stroke:0.2px currentColor;">can be filtered </div>
<div class="t" style="left:757.6px;top:728.9px;font-size:16.5px;color:#222B36;letter-spacing:0.203px;word-spacing:-1.106px;-webkit-text-stroke:0.2px currentColor;">based on whether </div>
<div class="t" style="left:893.5px;top:728.9px;font-size:16.5px;color:#222B36;letter-spacing:0.471px;word-spacing:-1.106px;-webkit-text-stroke:0.2px currentColor;">or not they have </div>
<div class="t" style="left:1020.0px;top:728.9px;font-size:16.5px;color:#222B36;letter-spacing:-0.087px;word-spacing:-1.106px;-webkit-text-stroke:0.2px currentColor;">a sending schedule.</div>
<svg class="b" style="left:2504px;top:710px" width="14" height="14" viewBox="0 0 14 14"><path d="M1.5 1.5 L12.5 12.5 M12.5 1.5 L1.5 12.5" stroke="#3E4A56" stroke-width="1.6"/></svg>
<div class="b" style="left:123px;top:791px;width:2413px;height:300px;background:#fff;border:1px solid #E8E9F0;box-sizing:border-box;border-radius:5px 5px 0 0;box-shadow:0 3px 6px rgba(40,45,80,0.06);"></div>
<div class="b" style="left:142px;top:810px;width:364px;height:39px;border:2px solid #D5D8E3;border-radius:5px;"></div>
<div class="b" style="left:143.5px;top:812px;width:166px;height:39px;background:#57507A;border-radius:4px 0 0 4px;"></div>
<div class="t" style="left:168.2px;top:825.5px;font-size:13.2px;color:#FFFFFF;-webkit-text-stroke:0.4px #FFFFFF;transform:scaleX(0.9591);transform-origin:0 0;">MY REPORTS</div>
<div class="b" style="left:261px;top:819px;width:24px;height:24px;background:#E8DDF1;border-radius:4px;"></div>
<div class="t" style="left:269.5px;top:825.2px;font-size:13px;color:#3E4650;-webkit-text-stroke:0.2px currentColor;">4</div>
<div class="t" style="left:333.5px;top:825.5px;font-size:13.2px;color:#1E2A36;-webkit-text-stroke:0.4px #1E2A36;transform:scaleX(0.9509);transform-origin:0 0;">SHARED REPORTS</div>
<div class="b" style="left:460px;top:819px;width:24px;height:24px;background:#F0F1F4;border-radius:4px;"></div>
<div class="t" style="left:468.5px;top:825.2px;font-size:13px;color:#3E4650;-webkit-text-stroke:0.2px currentColor;">0</div>
<div class="b" style="left:522px;top:809.5px;width:283px;height:39px;border:2px solid #D5D8E3;border-radius:5px;background:#F8F8FB;"></div>
<div class="t" style="left:538.2px;top:823.5px;font-size:17.5px;color:#9A9EA6;-webkit-text-stroke:0.2px currentColor;letter-spacing:-0.850px;">Search</div>
<svg class="b" style="left:775px;top:820px" width="24" height="24" viewBox="775 820 24 24"><circle cx="784.6" cy="829.6" r="5" fill="none" stroke="#A9AABF" stroke-width="1.6"/><path d="M788.4 833.5 L793.4 838.4" stroke="#A9AABF" stroke-width="1.8" stroke-linecap="round"/></svg>
<div class="b" style="left:822px;top:809.5px;width:283px;height:39px;border:2px solid #D5D8E3;border-radius:5px;background:#F9F9FB;"></div>
<div class="t" style="left:840.8px;top:824.7px;font-size:17.5px;color:#1E2A36;letter-spacing:0.199px;-webkit-text-stroke:0.45px #1E2A36;word-spacing:-1.173px;">All reports</div>
<svg class="b" style="left:1078px;top:824px" width="16" height="12" viewBox="1078 824 16 12"><path d="M1082 828.4 L1086.2 832.6 L1090.4 828.4" fill="none" stroke="#141A22" stroke-width="1.6" stroke-linecap="square"/></svg>
<div class="b" style="left:123px;top:872px;width:2413px;height:44px;background:#F0F1F8;"></div>
<div class="b" style="left:555px;top:872px;width:204px;height:44px;background:#DFE1EC;"></div>
<div class="b" style="left:123px;top:872px;width:2413px;height:1px;background:#E6E8EF;"></div>
<div class="b" style="left:555px;top:872px;width:1px;height:219px;background:#E9EAF0;"></div>
<div class="b" style="left:759px;top:872px;width:1px;height:219px;background:#E9EAF0;"></div>
<div class="b" style="left:963px;top:872px;width:1px;height:219px;background:#E9EAF0;"></div>
<div class="b" style="left:1347px;top:872px;width:1px;height:219px;background:#E9EAF0;"></div>
<div class="b" style="left:1467px;top:872px;width:1px;height:219px;background:#E9EAF0;"></div>
<div class="b" style="left:147.5px;top:885px;width:14px;height:14px;border:2.2px solid #1E2A36;border-radius:2px;"></div>
<div class="t" style="left:178.6px;top:887.4px;font-size:13.5px;color:#5D7180;font-weight:700;letter-spacing:-0.072px;word-spacing:-0.905px;">REPORT TITLE</div>
<div class="t" style="left:570.2px;top:887.4px;font-size:13.5px;color:#5D7180;font-weight:700;letter-spacing:-0.142px;">UPDATED</div>
<svg class="b" style="left:638px;top:890px" width="10" height="8" viewBox="0 0 10 8"><path d="M1.5 2 L5 5.8 L8.5 2" fill="none" stroke="#5D7180" stroke-width="1.5"/></svg>
<div class="t" style="left:774.5px;top:887.4px;font-size:13.5px;color:#5D7180;font-weight:700;letter-spacing:-0.602px;">SENT</div>
<div class="t" style="left:978.6px;top:887.4px;font-size:13.5px;color:#5D7180;font-weight:700;letter-spacing:-0.332px;">FREQUENCY</div>
<div class="t" style="left:1362.0px;top:887.4px;font-size:13.5px;color:#5D7180;font-weight:700;letter-spacing:-0.350px;">LANGUAGE</div>
<div class="t" style="left:1482.0px;top:887.4px;font-size:13.5px;color:#5D7180;font-weight:700;letter-spacing:-0.072px;word-spacing:-0.905px;">REPORT PERIOD</div>
<div class="b" style="left:123px;top:960px;width:2413px;height:44px;background:#F9F9FC;"></div>
<div class="b" style="left:123px;top:1047px;width:2413px;height:44px;background:#F9F9FC;"></div>
<div class="b" style="left:123px;top:960px;width:2413px;height:1px;background:#E6E8EF;"></div>
<div class="b" style="left:123px;top:1003px;width:2413px;height:1px;background:#E6E8EF;"></div>
<div class="b" style="left:123px;top:1047px;width:2413px;height:1px;background:#E6E8EF;"></div>
<div class="b" style="left:123px;top:1090px;width:2413px;height:1px;background:#E6E8EF;"></div>
<div class="b" style="left:555px;top:916px;width:1px;height:175px;background:#E9EAF0;"></div>
<div class="b" style="left:759px;top:916px;width:1px;height:175px;background:#E9EAF0;"></div>
<div class="b" style="left:963px;top:916px;width:1px;height:175px;background:#E9EAF0;"></div>
<div class="b" style="left:1347px;top:916px;width:1px;height:175px;background:#E9EAF0;"></div>
<div class="b" style="left:1467px;top:916px;width:1px;height:175px;background:#E9EAF0;"></div>
<div class="b" style="left:147.5px;top:929.2px;width:14px;height:14px;border:2.2px solid #1E2A36;border-radius:2px;"></div>
<svg class="b" style="left:177px;top:928.5px" width="21" height="20" viewBox="0 0 21 20"><path d="M5.2 0.8 L15 0.8 L19.5 5.2 L19.5 18 L5.2 18 Z" fill="#EDEDED" stroke="#D6D6D6" stroke-width="0.7"/><path d="M15 0.8 L15 5.2 L19.5 5.2 Z" fill="#FAFAFA" stroke="#CFCFCF" stroke-width="0.5"/><rect x="1.3" y="8.5" width="16.4" height="8" rx="0.8" fill="#D2392C"/><text x="2.6" y="15.2" font-family="Liberation Sans" font-weight="700" font-size="6.8" fill="#fff" letter-spacing="0.9">PDF</text></svg>
<div class="t" style="left:207.5px;top:931.9px;font-size:17.5px;color:#222B36;-webkit-text-stroke:0.2px currentColor;letter-spacing:-0.368px;word-spacing:-1.173px;">SEO report_pandadoc.com</div>
<div class="t" style="left:570.6px;top:931.9px;font-size:17.5px;color:#222B36;-webkit-text-stroke:0.2px currentColor;letter-spacing:-0.454px;word-spacing:-1.173px;">Dec-13 2024</div>
<div class="t" style="left:774.6px;top:931.9px;font-size:17.5px;color:#222B36;-webkit-text-stroke:0.2px currentColor;letter-spacing:-0.422px;">-</div>
<div class="t" style="left:978.6px;top:931.9px;font-size:17.5px;color:#222B36;-webkit-text-stroke:0.2px currentColor;letter-spacing:-0.422px;">-</div>
<div class="t" style="left:1362.0px;top:931.9px;font-size:17.5px;color:#222B36;-webkit-text-stroke:0.2px currentColor;letter-spacing:-0.533px;">English</div>
<div class="t" style="left:1482.0px;top:931.9px;font-size:17.5px;color:#222B36;-webkit-text-stroke:0.2px currentColor;letter-spacing:0.059px;word-spacing:-1.173px;">Dec-02 2024 - Dec-08 2024</div>
<div class="b" style="left:147.5px;top:972.8px;width:14px;height:14px;border:2.2px solid #1E2A36;border-radius:2px;"></div>
<svg class="b" style="left:177px;top:972.1px" width="21" height="20" viewBox="0 0 21 20"><path d="M5.2 0.8 L15 0.8 L19.5 5.2 L19.5 18 L5.2 18 Z" fill="#EDEDED" stroke="#D6D6D6" stroke-width="0.7"/><path d="M15 0.8 L15 5.2 L19.5 5.2 Z" fill="#FAFAFA" stroke="#CFCFCF" stroke-width="0.5"/><rect x="1.3" y="8.5" width="16.4" height="8" rx="0.8" fill="#D2392C"/><text x="2.6" y="15.2" font-family="Liberation Sans" font-weight="700" font-size="6.8" fill="#fff" letter-spacing="0.9">PDF</text></svg>
<div class="t" style="left:207.5px;top:975.5px;font-size:17.5px;color:#222B36;-webkit-text-stroke:0.2px currentColor;letter-spacing:-0.114px;word-spacing:-1.173px;">gymshark.com Project Report</div>
<div class="t" style="left:570.6px;top:975.5px;font-size:17.5px;color:#222B36;-webkit-text-stroke:0.2px currentColor;letter-spacing:-0.454px;word-spacing:-1.173px;">Dec-12 2024</div>
<div class="t" style="left:774.6px;top:975.5px;font-size:17.5px;color:#222B36;-webkit-text-stroke:0.2px currentColor;letter-spacing:-0.422px;">-</div>
<div class="t" style="left:978.6px;top:975.5px;font-size:17.5px;color:#222B36;-webkit-text-stroke:0.2px currentColor;letter-spacing:-0.373px;word-spacing:-1.173px;">Every week, on: Thursday</div>
<div class="t" style="left:1362.0px;top:975.5px;font-size:17.5px;color:#222B36;-webkit-text-stroke:0.2px currentColor;letter-spacing:-0.533px;">English</div>
<div class="t" style="left:1482.0px;top:975.5px;font-size:17.5px;color:#222B36;-webkit-text-stroke:0.2px currentColor;letter-spacing:-0.145px;word-spacing:-1.173px;">Dec-07 2024 - Dec-13 2024</div>
<div class="b" style="left:147.5px;top:1016.4px;width:14px;height:14px;border:2.2px solid #1E2A36;border-radius:2px;"></div>
<svg class="b" style="left:177px;top:1015.7px" width="21" height="20" viewBox="0 0 21 20"><path d="M5.2 0.8 L15 0.8 L19.5 5.2 L19.5 18 L5.2 18 Z" fill="#EDEDED" stroke="#D6D6D6" stroke-width="0.7"/><path d="M15 0.8 L15 5.2 L19.5 5.2 Z" fill="#FAFAFA" stroke="#CFCFCF" stroke-width="0.5"/><rect x="1.3" y="8.5" width="16.4" height="8" rx="0.8" fill="#D2392C"/><text x="2.6" y="15.2" font-family="Liberation Sans" font-weight="700" font-size="6.8" fill="#fff" letter-spacing="0.9">PDF</text></svg>
<div class="t" style="left:207.5px;top:1019.1px;font-size:17.5px;color:#222B36;-webkit-text-stroke:0.2px currentColor;letter-spacing:-0.218px;">Report_linkedin.com</div>
<div class="t" style="left:570.6px;top:1019.1px;font-size:17.5px;color:#222B36;-webkit-text-stroke:0.2px currentColor;letter-spacing:-0.024px;word-spacing:-1.173px;">Dec-03 2024</div>
<div class="t" style="left:774.6px;top:1019.1px;font-size:17.5px;color:#222B36;-webkit-text-stroke:0.2px currentColor;letter-spacing:-0.422px;">-</div>
<div class="t" style="left:978.6px;top:1019.1px;font-size:17.5px;color:#222B36;-webkit-text-stroke:0.2px currentColor;letter-spacing:-0.422px;">-</div>
<div class="t" style="left:1362.0px;top:1019.1px;font-size:17.5px;color:#222B36;-webkit-text-stroke:0.2px currentColor;letter-spacing:-0.533px;">English</div>
<div class="t" style="left:1482.0px;top:1019.1px;font-size:17.5px;color:#222B36;-webkit-text-stroke:0.2px currentColor;letter-spacing:-0.062px;word-spacing:-1.173px;">Nov-25 2024 - Dec-01 2024</div>
<div class="b" style="left:147.5px;top:1060.0px;width:14px;height:14px;border:2.2px solid #1E2A36;border-radius:2px;"></div>
<svg class="b" style="left:177px;top:1059.3px" width="21" height="20" viewBox="0 0 21 20"><path d="M5.2 0.8 L15 0.8 L19.5 5.2 L19.5 18 L5.2 18 Z" fill="#EDEDED" stroke="#D6D6D6" stroke-width="0.7"/><path d="M15 0.8 L15 5.2 L19.5 5.2 Z" fill="#FAFAFA" stroke="#CFCFCF" stroke-width="0.5"/><rect x="1.3" y="8.5" width="16.4" height="8" rx="0.8" fill="#D2392C"/><text x="2.6" y="15.2" font-family="Liberation Sans" font-weight="700" font-size="6.8" fill="#fff" letter-spacing="0.9">PDF</text></svg>
<div class="t" style="left:207.5px;top:1062.7px;font-size:17.5px;color:#222B36;-webkit-text-stroke:0.2px currentColor;letter-spacing:-0.114px;word-spacing:-1.173px;">apple.com Project Report</div>
<div class="t" style="left:570.6px;top:1062.7px;font-size:17.5px;color:#222B36;-webkit-text-stroke:0.2px currentColor;letter-spacing:-0.114px;word-spacing:-1.173px;">Dec-02 2024</div>
<div class="t" style="left:774.6px;top:1062.7px;font-size:17.5px;color:#222B36;-webkit-text-stroke:0.2px currentColor;word-spacing:-1.173px;">Dec-09 2024</div>
<div class="t" style="left:978.6px;top:1062.7px;font-size:17.5px;color:#222B36;-webkit-text-stroke:0.2px currentColor;letter-spacing:-0.324px;word-spacing:-1.173px;">Every week, on: Monday</div>
<div class="t" style="left:1362.0px;top:1062.7px;font-size:17.5px;color:#222B36;-webkit-text-stroke:0.2px currentColor;letter-spacing:-0.533px;">English</div>
<div class="t" style="left:1482.0px;top:1062.7px;font-size:17.5px;color:#222B36;-webkit-text-stroke:0.2px currentColor;letter-spacing:0.059px;word-spacing:-1.173px;">Dec-02 2024 - Dec-08 2024</div>
<div class="b" style="left:2452.3px;top:1116.2px;width:79.4px;height:38.4px;border:2px solid #D3D6E2;border-radius:5px;background:#F9F9FB;"></div>
<div class="t" style="left:2470.0px;top:1130.0px;font-size:16.5px;color:#141A22;-webkit-text-stroke:0.2px currentColor;letter-spacing:0.946px;">20</div>
<svg class="b" style="left:2504px;top:1130px" width="16" height="12" viewBox="2504 1130 16 12"><path d="M2507.7 1134.8 L2512.5 1139.5 L2517.3 1134.8" fill="none" stroke="#141A22" stroke-width="1.5"/></svg>
<svg class="b" style="left:118px;top:1378px" width="36" height="38" viewBox="118 1378 36 38"><g transform="translate(123 1382.6) scale(1.065 1.1) translate(-38.2 -54.1)"><path d="M38.2 65.7 L50.2 54.5 Q50.6 54.1 51.2 54.1 L55.2 54.1 Q56.3 54.1 56.3 55.2 L56.3 59.6 Q56.3 60.6 55.5 61.4 L52.2 64.3 Q50.6 65.7 48.6 65.7 Z" fill="#141C26"/><path d="M42.7 74.5 L49.5 66.9 L61.9 66.9 L48.4 80.2 L48.2 74.5 Z" fill="#141C26"/></g></svg>
<div class="t" style="left:158.6px;top:1390.7px;font-size:17.5px;color:#141C26;-webkit-text-stroke:0.2px currentColor;letter-spacing:-0.783px;word-spacing:-1.173px;">SE Ranking</div>
<div class="t" style="left:2085.4px;top:1390.8px;font-size:17.5px;color:#6C7F8C;-webkit-text-stroke:0.2px currentColor;letter-spacing:-0.240px;word-spacing:-1.173px;">Report a bug</div>
<div class="t" style="left:2215.9px;top:1390.8px;font-size:17.5px;color:#6C7F8C;-webkit-text-stroke:0.2px currentColor;letter-spacing:0.231px;">Affiliates</div>
<div class="t" style="left:2318.4px;top:1390.8px;font-size:17.5px;color:#6C7F8C;-webkit-text-stroke:0.2px currentColor;letter-spacing:-1.254px;">API</div>
<div class="t" style="left:2379.0px;top:1390.8px;font-size:17.5px;color:#6C7F8C;-webkit-text-stroke:0.2px currentColor;letter-spacing:-0.170px;word-spacing:-1.173px;">What's new</div>
<div class="t" style="left:2500.9px;top:1390.8px;font-size:17.5px;color:#6C7F8C;-webkit-text-stroke:0.2px currentColor;letter-spacing:-0.498px;">Help</div>
<div class="b" style="left:2453px;top:1294px;width:77px;height:77px;border-radius:50%;background:#0567FF;box-shadow:0 8px 22px rgba(40,60,60,0.17);"></div>
<svg class="b" style="left:2470px;top:1318px" width="44" height="36" viewBox="0 0 44 36"><rect x="2.3" y="2.8" width="38.5" height="19.2" rx="9.6" fill="#fff"/><path d="M25.8 25.8 L33.1 25.8 L33.1 33.2 Z" fill="#fff"/></svg>
</body></html>
